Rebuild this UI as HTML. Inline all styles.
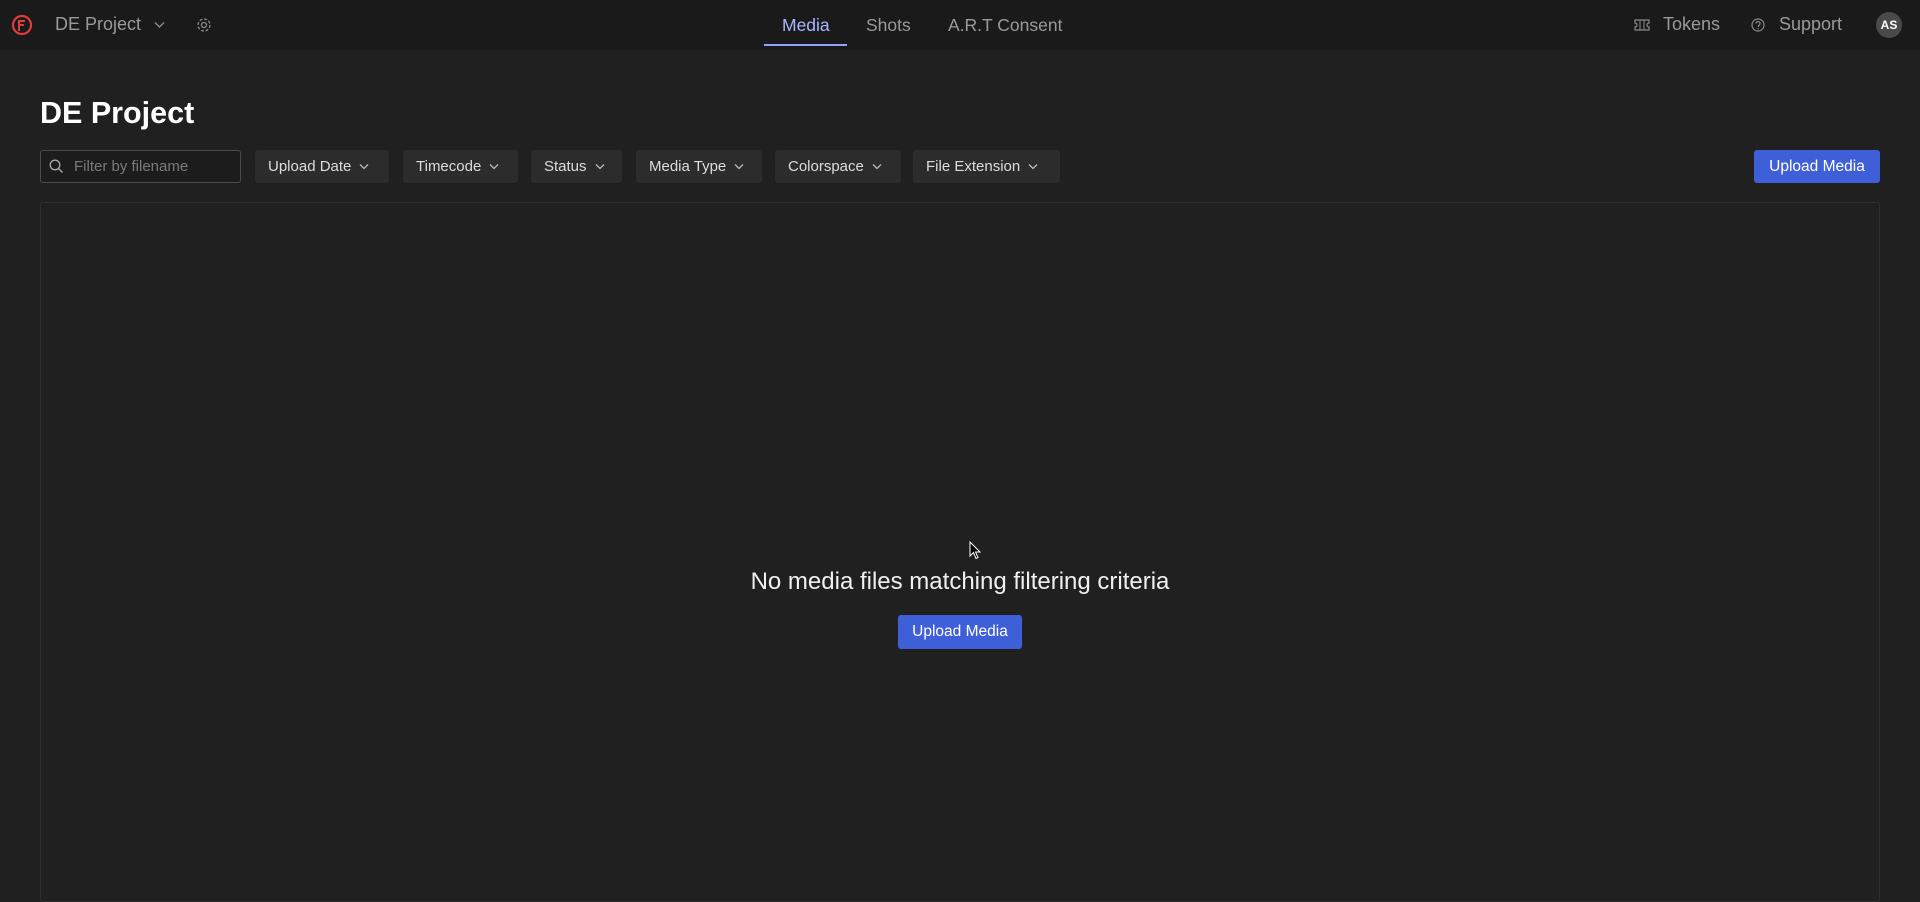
<!DOCTYPE html>
<html><head><meta charset="utf-8"><style>
*{box-sizing:border-box;margin:0;padding:0}
body{width:1920px;height:883px;background:#202020;font-family:"Liberation Sans",sans-serif;color:#e8e8e8;overflow:hidden;position:relative}
.hdr{position:absolute;left:0;top:0;width:1920px;height:50px;background:#1a1a1a}
.a{position:absolute}
.nav{font-size:18px;color:#9a9a9a;top:14px}
.tab{font-size:17.5px;top:15px;color:#9a9a9a}
.flt{position:absolute;top:150px;height:33px;background:#2c2c2c;border-radius:3px;font-size:15px;color:#dcdcdc;display:flex;align-items:center;padding-left:13px}
.flt svg{margin-left:8px}
.btn{position:absolute;background:#3f5fd9;color:#fff;border-radius:3px;font-size:15.5px;display:flex;align-items:center;justify-content:center}
</style></head><body>
<div class="hdr"></div>
<svg class="a" style="left:11px;top:14px" width="22" height="22" viewBox="0 0 22 22"><circle cx="11" cy="11" r="9" fill="none" stroke="#e03c3c" stroke-width="2.2"/><path d="M8 17V7h6M8 11h5" fill="none" stroke="#e03c3c" stroke-width="2"/></svg>
<div class="a nav" style="left:55px">DE Project</div>
<svg class="a" style="left:154px;top:21px" width="11" height="8" viewBox="0 0 11 8"><path d="M1 1.5l4.5 4.5 4.5-4.5" fill="none" stroke="#8a8a8a" stroke-width="1.4"/></svg>
<svg class="a" style="left:196px;top:17px" width="16" height="16" viewBox="0 0 16 16"><circle cx="8" cy="8" r="2.5" fill="none" stroke="#8a8a8a" stroke-width="1.3"/><circle cx="8" cy="8" r="6" fill="none" stroke="#8a8a8a" stroke-width="1.3" stroke-dasharray="3 1.7"/></svg>
<div class="a tab" style="left:782px;color:#a9b7ff">Media</div>
<div class="a" style="left:764px;top:44px;width:83px;height:2px;background:#8ea2ff"></div>
<div class="a tab" style="left:866px">Shots</div>
<div class="a tab" style="left:948px">A.R.T Consent</div>
<svg class="a" style="left:1634px;top:19px" width="16" height="12" viewBox="0 0 16 12"><path d="M1 1h14v3a2 2 0 0 0 0 4v3H1V8a2 2 0 0 0 0-4z" fill="none" stroke="#8a8a8a" stroke-width="1.2"/><path d="M6 1v10M10 1v10" stroke="#8a8a8a" stroke-width="1"/></svg>
<div class="a nav" style="left:1663px">Tokens</div>
<svg class="a" style="left:1751px;top:18px" width="14" height="14" viewBox="0 0 14 14"><circle cx="7" cy="7" r="6" fill="none" stroke="#8a8a8a" stroke-width="1.2"/><path d="M5 5.5a2 2 0 1 1 2.5 2V9" fill="none" stroke="#8a8a8a" stroke-width="1.2"/><circle cx="7" cy="10.8" r=".7" fill="#8a8a8a"/></svg>
<div class="a nav" style="left:1779px">Support</div>
<div class="a" style="left:1876px;top:12px;width:26px;height:26px;border-radius:50%;background:#4a4a4a;color:#fff;font-size:12px;font-weight:bold;display:flex;align-items:center;justify-content:center">AS</div>
<div class="a" style="left:40px;top:96px;font-size:30.5px;font-weight:bold;color:#fff">DE Project</div>
<div class="a" style="left:40px;top:150px;width:201px;height:33px;border:1px solid #4a4a4a;border-radius:3px;background:#1c1c1c"></div>
<svg class="a" style="left:49px;top:159px" width="15" height="15" viewBox="0 0 15 15"><circle cx="6" cy="6" r="4.8" fill="none" stroke="#aaa" stroke-width="1.3"/><path d="M9.5 9.5l4 4" stroke="#aaa" stroke-width="1.3"/></svg>
<div class="a" style="left:74px;top:158px;font-size:15px;color:#7a7a7a">Filter by filename</div>
<div class="flt" style="left:255px;width:134px">Upload Date<svg width="10" height="7" viewBox="0 0 10 7"><path d="M1 1.5l4 4 4-4" fill="none" stroke="#bbb" stroke-width="1.3"/></svg></div>
<div class="flt" style="left:403px;width:115px">Timecode<svg width="10" height="7" viewBox="0 0 10 7"><path d="M1 1.5l4 4 4-4" fill="none" stroke="#bbb" stroke-width="1.3"/></svg></div>
<div class="flt" style="left:531px;width:91px">Status<svg width="10" height="7" viewBox="0 0 10 7"><path d="M1 1.5l4 4 4-4" fill="none" stroke="#bbb" stroke-width="1.3"/></svg></div>
<div class="flt" style="left:636px;width:126px">Media Type<svg width="10" height="7" viewBox="0 0 10 7"><path d="M1 1.5l4 4 4-4" fill="none" stroke="#bbb" stroke-width="1.3"/></svg></div>
<div class="flt" style="left:775px;width:126px">Colorspace<svg width="10" height="7" viewBox="0 0 10 7"><path d="M1 1.5l4 4 4-4" fill="none" stroke="#bbb" stroke-width="1.3"/></svg></div>
<div class="flt" style="left:913px;width:147px">File Extension<svg width="10" height="7" viewBox="0 0 10 7"><path d="M1 1.5l4 4 4-4" fill="none" stroke="#bbb" stroke-width="1.3"/></svg></div>
<div class="btn" style="left:1754px;top:150px;width:126px;height:33px">Upload Media</div>
<div class="a" style="left:40px;top:202px;width:1840px;height:700px;border:1px solid #2e2e2e;border-radius:3px"></div>
<div class="a" style="left:0;width:1920px;top:568px;text-align:center;font-size:24px;color:#f0f0f0">No media files matching filtering criteria</div>
<div class="btn" style="left:898px;top:615px;width:124px;height:34px">Upload Media</div>
<svg class="a" style="left:969px;top:541px" width="12" height="19" viewBox="0 0 12 19"><path d="M1 1v14l3.5-3.5 2.5 6 2-1-2.5-5.5H11z" fill="#000" stroke="#fff" stroke-width="1"/></svg>
</body></html>
